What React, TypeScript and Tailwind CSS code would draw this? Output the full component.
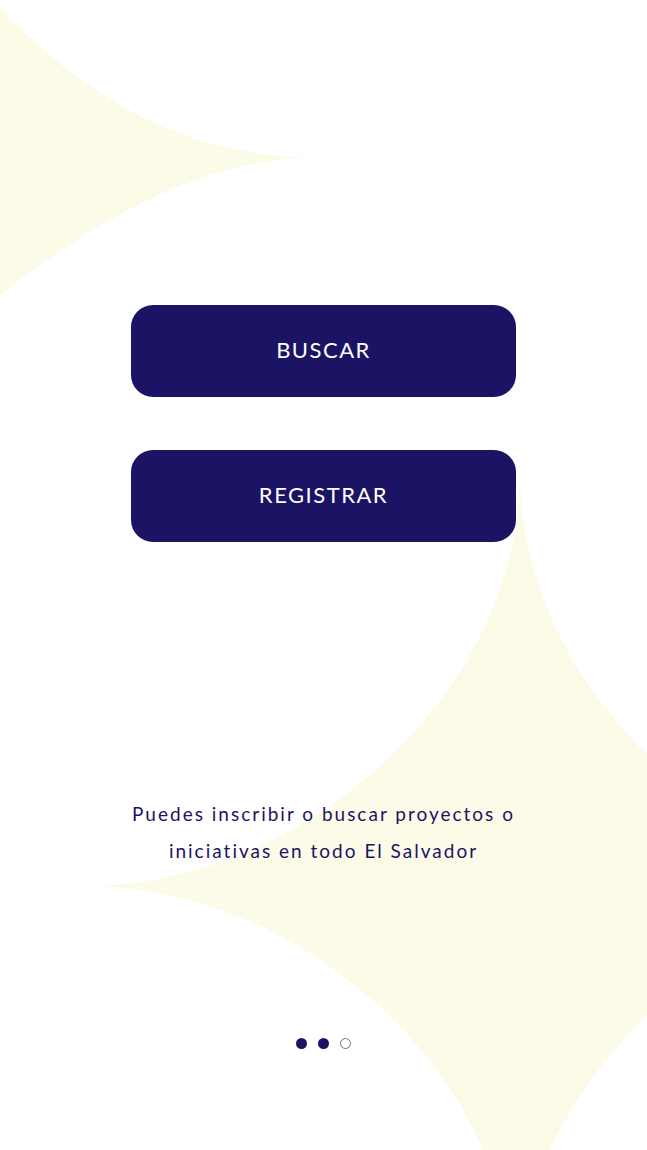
import { FC } from 'react';

const Backdrop: FC = () => (
  <svg
    className="absolute inset-0 w-full h-full pointer-events-none"
    viewBox="0 0 647 1150"
    preserveAspectRatio="none"
  >
    <path d="M0 8 Q140 157 312 157 Q170 160 0 295 Z" fill="#fcfbe8" />
    <path
      d="M520 470 C520 700 300 880 98 886 C300 892 515 1070 515 1300 C520 1070 740 892 940 886 C740 880 520 700 520 470 Z"
      fill="#fcfbe8"
    />
  </svg>
);

const ActionButton: FC<{ label: string }> = ({ label }) => (
  <button className="w-[385px] h-[92px] rounded-[22px] bg-[#1b1464] text-white text-[22px] tracking-[1.5px] font-normal flex items-center justify-center pb-[3px]">
    {label}
  </button>
);

export default function App() {
  return (
    <div className="relative w-[647px] h-[1150px] bg-white overflow-hidden font-['Lato','Noto_Sans',sans-serif]">
      <Backdrop />
      <div className="relative flex flex-col items-center pt-[305px]">
        <div className="flex flex-col gap-[53px]">
          <ActionButton label="BUSCAR" />
          <ActionButton label="REGISTRAR" />
        </div>
        <p className="mt-[253px] text-center text-[19px] leading-[37px] tracking-[2px] text-[#1b1464] font-normal">
          Puedes inscribir o buscar proyectos o
          <br />
          iniciativas en todo El Salvador
        </p>
        <div className="mt-[169px] flex items-center gap-[11px]">
          <span className="w-[11px] h-[11px] rounded-full bg-[#1b1464]" />
          <span className="w-[11px] h-[11px] rounded-full bg-[#1b1464]" />
          <span className="w-[11px] h-[11px] rounded-full border border-gray-500 bg-white" />
        </div>
      </div>
    </div>
  );
}
